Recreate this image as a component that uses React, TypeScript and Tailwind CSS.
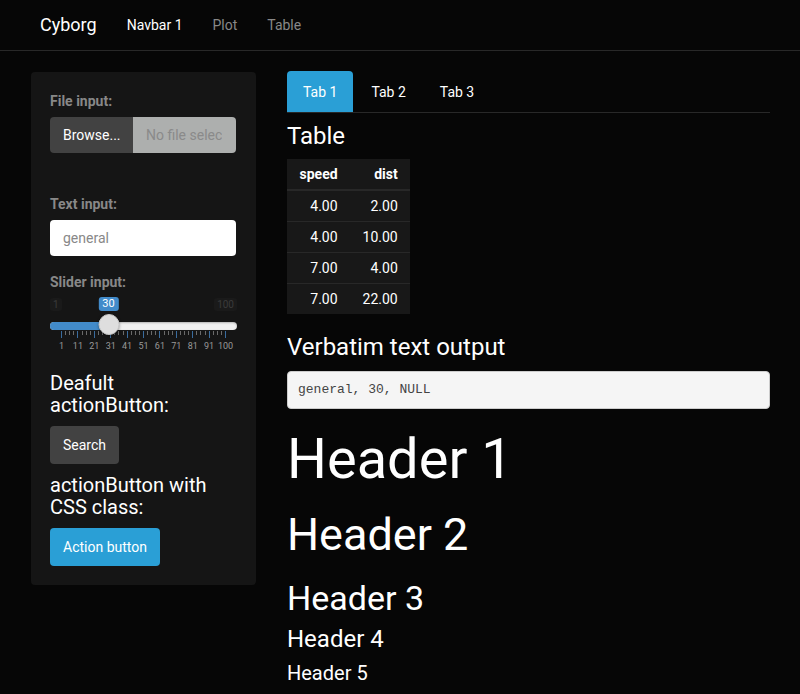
import React from "react";

const font = { fontFamily: "Roboto, 'Liberation Sans', sans-serif" };

function Slider() {
  const left = 11;
  const right = 175;
  const majors = Array.from({ length: 11 }, (_, i) => left + ((right - left) * i) / 10);
  const minors: number[] = [];
  for (let i = 0; i < 10; i++) {
    for (let j = 1; j <= 3; j++) {
      minors.push(majors[i] + ((majors[i + 1] - majors[i]) * j) / 4);
    }
  }
  const labels = ["1", "11", "21", "31", "41", "51", "61", "71", "81", "91", "100"];
  const handleX = 58.5;
  return (
    <div className="relative h-[57px] w-full">
      <span className="absolute left-0 top-[1px] rounded-[3px] bg-[#1a1a1a] px-[3px] text-[10px] leading-[13px] text-[#3a3a3a]">
        1
      </span>
      <span className="absolute right-0 top-[1px] rounded-[3px] bg-[#1a1a1a] px-[3px] text-[10px] leading-[13px] text-[#3a3a3a]">
        100
      </span>
      <span
        className="absolute top-0 -translate-x-1/2 rounded-[3px] bg-[#428bca] px-[4px] text-[11px] leading-[14px] text-white"
        style={{ left: handleX }}
      >
        30
      </span>
      <div className="absolute left-0 right-0 top-[25px] h-[8px] rounded-full bg-[#f0f0f0] shadow-[inset_0_1px_2px_rgba(0,0,0,0.25)]" />
      <div
        className="absolute left-0 top-[25px] h-[8px] rounded-l-full bg-[#428bca]"
        style={{ width: handleX }}
      />
      {minors.map((x, i) => (
        <div
          key={"m" + i}
          className="absolute top-[34px] h-[4px] w-px bg-[#6a6a6a]"
          style={{ left: x }}
        />
      ))}
      {majors.map((x, i) => (
        <div
          key={"M" + i}
          className="absolute top-[34px] h-[7px] w-px bg-[#3a6c9e]"
          style={{ left: x }}
        />
      ))}
      {majors.map((x, i) => (
        <span
          key={"l" + i}
          className="absolute top-[44px] -translate-x-1/2 text-[9px] leading-[10px] text-[#999]"
          style={{ left: x + 0.5 }}
        >
          {labels[i]}
        </span>
      ))}
      <div
        className="absolute top-[17px] h-[21px] w-[21px] -translate-x-1/2 rounded-full border border-[#c8c8c8] bg-[#dedede] shadow-[0_1px_3px_rgba(0,0,0,0.4)]"
        style={{ left: handleX }}
      />
    </div>
  );
}

export default function App() {
  const rows = [
    ["4.00", "2.00"],
    ["4.00", "10.00"],
    ["7.00", "4.00"],
    ["7.00", "22.00"],
  ];
  return (
    <div className="h-[694px] w-full overflow-hidden bg-[#060606] text-[14px] text-[#888]" style={font}>
      {/* Navbar */}
      <div className="flex h-[51px] items-center border-b border-[#282828] pl-[25px]">
        <span className="px-[15px] text-[18px] leading-[20px] text-white">Cyborg</span>
        <span className="px-[15px] text-[14px] leading-[20px] text-white">Navbar 1</span>
        <span className="px-[15px] text-[14px] leading-[20px] text-[#888]">Plot</span>
        <span className="px-[15px] text-[14px] leading-[20px] text-[#888]">Table</span>
      </div>

      <div className="flex items-start pt-[20px]">
        {/* Sidebar */}
        <div className="ml-[31px] mt-[1px] w-[225px] rounded-[4px] bg-[#151515] p-[19px]">
          <div className="text-[14px] font-bold leading-[20px] text-[#888]">File input:</div>
          <div className="mt-[6px] flex h-[36px] w-[186px]">
            <div className="flex w-[83px] shrink-0 items-center rounded-l-[4px] bg-[#424242] px-[13px] text-white">Browse...</div>
            <div className="flex min-w-0 flex-1 items-center rounded-r-[4px] bg-[#adafae] px-[13px] text-[#8a8a8a]">
              <span className="block overflow-hidden whitespace-nowrap">No file selec</span>
            </div>
          </div>

          <div className="mt-[41px] text-[14px] font-bold leading-[20px] text-[#888]">Text input:</div>
          <div className="mt-[6px] flex h-[36px] w-[186px] items-center rounded-[4px] bg-white px-[13px] text-[#888]">
            general
          </div>

          <div className="mt-[16px] text-[14px] font-bold leading-[20px] text-[#888]">Slider input:</div>
          <div className="mt-[5px]">
            <Slider />
          </div>

          <div className="mt-[18px] text-[20px] leading-[22px] text-white">
            Deafult
            <br />
            actionButton:
          </div>
          <div className="mt-[10px] flex">
            <div className="flex h-[38px] items-center rounded-[4px] bg-[#424242] px-[13px] text-white">Search</div>
          </div>
          <div className="mt-[10px] text-[20px] leading-[22px] text-white">
            actionButton with
            <br />
            CSS class:
          </div>
          <div className="mt-[10px] flex">
            <div className="flex h-[38px] items-center rounded-[4px] bg-[#2a9fd6] px-[13px] text-white">Action button</div>
          </div>
        </div>

        {/* Main */}
        <div className="ml-[31px] w-[483px]">
          <div className="flex border-b border-[#282828]">
            <div className="mr-[2px] rounded-t-[4px] bg-[#2a9fd6] px-[16px] pb-[9px] pt-[11px] leading-[21px] text-white">Tab 1</div>
            <div className="mr-[2px] px-[16px] pb-[9px] pt-[11px] leading-[21px] text-white">Tab 2</div>
            <div className="px-[16px] pb-[9px] pt-[11px] leading-[21px] text-white">Tab 3</div>
          </div>

          <div className="mt-[10px] text-[24px] leading-[1.1] text-white">Table</div>
          <table className="mt-[10px] border-collapse bg-[#181818] text-white">
            <thead>
              <tr>
                <th className="border-b-2 border-[#282828] px-[12.5px] py-[5px] text-right font-bold leading-[20px]">speed</th>
                <th className="border-b-2 border-[#282828] px-[12.5px] py-[5px] text-right font-bold leading-[20px]">dist</th>
              </tr>
            </thead>
            <tbody>
              {rows.map((r, i) => (
                <tr key={i} className={i === 0 ? "" : "border-t border-[#282828]"}>
                  <td className="px-[12.5px] py-[5px] text-right leading-[20px]">{r[0]}</td>
                  <td className="px-[12.5px] py-[5px] text-right leading-[20px]">{r[1]}</td>
                </tr>
              ))}
            </tbody>
          </table>

          <div className="mt-[20px] text-[24px] leading-[1.1] text-white">Verbatim text output</div>
          <div
            className="mt-[10px] rounded-[4px] border border-[#cccccc] bg-[#f5f5f5] px-[10px] py-[9px] text-[13px] leading-[18px] text-[#444]"
            style={{ fontFamily: "'Liberation Mono', 'Courier New', monospace" }}
          >
            general, 30, NULL
          </div>

          <div className="mt-[20px] text-[56px] leading-[1.1] text-white">Header 1</div>
          <div className="mt-[20px] text-[45px] leading-[1.1] text-white">Header 2</div>
          <div className="mt-[20px] text-[34px] leading-[1.1] text-white">Header 3</div>
          <div className="mt-[9px] text-[24px] leading-[1.1] text-white">Header 4</div>
          <div className="mt-[9px] text-[20px] leading-[1.1] text-white">Header 5</div>
        </div>
      </div>
    </div>
  );
}
